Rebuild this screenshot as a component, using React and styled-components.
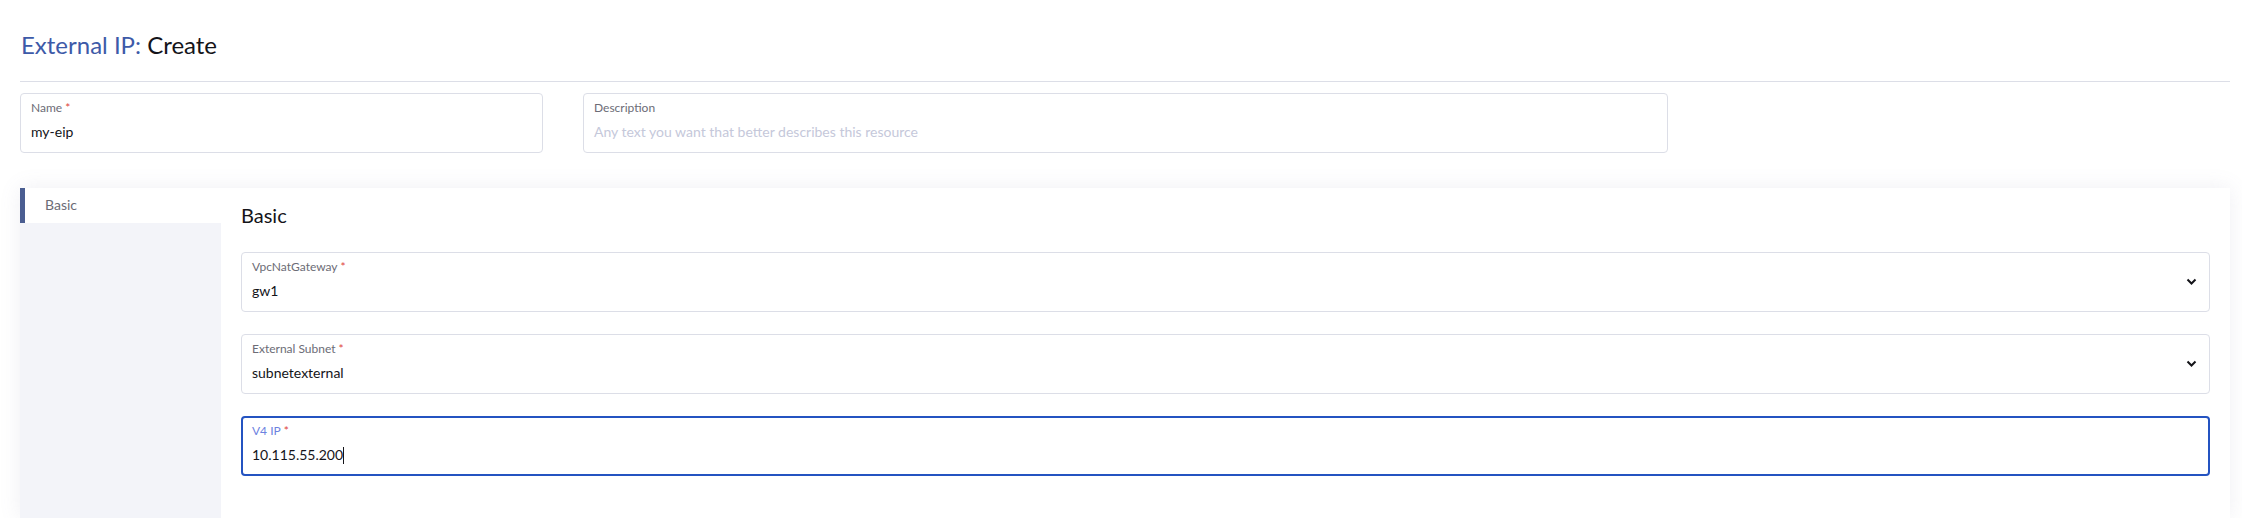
import React from "react";
import styled, { createGlobalStyle } from "styled-components";

const GlobalStyle = createGlobalStyle`
  body {
    margin: 0;
    background: #fff;
    font-family: Lato, "Open Sans", sans-serif;
    color: #141419;
  }
`;

const Page = styled.div`
  padding: 0 12px 0 20px;
`;

const Header = styled.header`
  display: flex;
  align-items: center;
  height: 81px;
  padding-left: 1px;
  border-bottom: 1px solid #dcdee7;

  h1 {
    margin: 8px 0 0;
    font-size: 24px;
    font-weight: 400;
    color: #141419;
  }

  span {
    color: #3d5aa8;
  }
`;

const TopRow = styled.div`
  display: flex;
  gap: 40px;
  padding-top: 11px;
`;

const Field = styled.div`
  position: relative;
  box-sizing: border-box;
  width: ${(p) => p.$width || "100%"};
  height: 60px;
  padding: ${(p) => (p.$focused ? "5px 9px" : "6px 10px")};
  border: ${(p) => (p.$focused ? "2px solid #2453c1" : "1px solid #dcdee7")};
  border-radius: 4px;
  background: #fff;
  display: flex;
  flex-direction: column;
  gap: 8px;
`;

const Label = styled.label`
  font-size: 12px;
  line-height: 15px;
  color: ${(p) => (p.$focused ? "#6c82e0" : "#6c6c76")};

  i {
    font-style: normal;
    color: #e0443b;
    margin-left: 3px;
  }
`;

const Value = styled.div`
  font-size: 14px;
  line-height: 18px;
  color: ${(p) => (p.$placeholder ? "#c5c8da" : "#141419")};
  display: flex;
  align-items: center;
`;

const Caret = styled.span`
  display: inline-block;
  width: 1px;
  height: 17px;
  background: #141419;
`;

const Chevron = styled.svg`
  position: absolute;
  right: 12px;
  top: 50%;
  margin-top: -4px;
`;

const Panel = styled.section`
  display: flex;
  margin-top: 35px;
  background: #fff;
  box-shadow: 0 0 20px rgba(120, 125, 160, 0.12);
`;

const SideTabs = styled.nav`
  width: 201px;
  flex-shrink: 0;
  background: #f3f4f9;
  display: flex;
  flex-direction: column;
`;

const Tab = styled.div`
  height: 35px;
  display: flex;
  align-items: center;
  padding: 0 0 3px 20px;
  box-sizing: border-box;
  font-size: 14px;
  color: #6c6c76;
  background: ${(p) => (p.$active ? "#fff" : "transparent")};
  border-left: 5px solid ${(p) => (p.$active ? "#4a5d91" : "transparent")};
`;

const Body = styled.div`
  flex: 1;
  padding: 12px 20px 42px;
  display: flex;
  flex-direction: column;
  gap: 22px;

  h3 {
    margin: 0;
    font-size: 20px;
    line-height: 30px;
    font-weight: 400;
    color: #141419;
  }
`;

function ChevronDown() {
  return (
    <Chevron width="11" height="8" viewBox="0 0 11 8">
      <path d="M1.5 1.5 L5.5 5.5 L9.5 1.5" fill="none" stroke="#141419" strokeWidth="2" />
    </Chevron>
  );
}

function LabeledInput({ label, required, value, placeholder, width, focused, select, caret }) {
  return (
    <Field $width={width} $focused={focused}>
      <Label $focused={focused}>
        {label}
        {required && <i>*</i>}
      </Label>
      <Value $placeholder={!value}>
        {value || placeholder}
        {caret && <Caret />}
      </Value>
      {select && <ChevronDown />}
    </Field>
  );
}

export default function App() {
  return (
    <>
      <GlobalStyle />
      <Page>
        <Header>
          <h1>
            <span>External IP:</span> Create
          </h1>
        </Header>
        <TopRow>
          <LabeledInput label="Name" required value="my-eip" width="523px" />
          <LabeledInput
            label="Description"
            placeholder="Any text you want that better describes this resource"
            width="1085px"
          />
        </TopRow>
        <Panel>
          <SideTabs>
            <Tab $active>Basic</Tab>
          </SideTabs>
          <Body>
            <h3>Basic</h3>
            <LabeledInput label="VpcNatGateway" required value="gw1" select />
            <LabeledInput label="External Subnet" required value="subnetexternal" select />
            <LabeledInput label="V4 IP" required value="10.115.55.200" focused caret />
          </Body>
        </Panel>
      </Page>
    </>
  );
}
